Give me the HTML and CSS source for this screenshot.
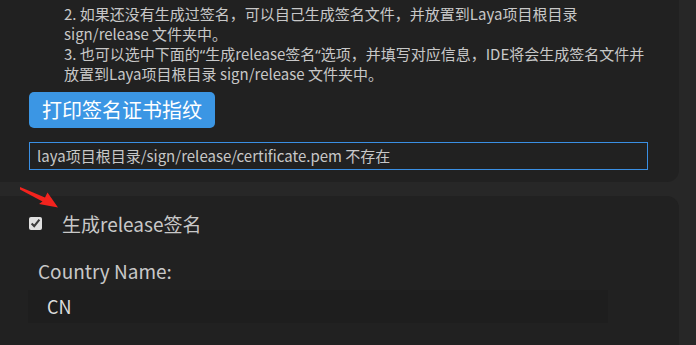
FILE: index.html
```html
<!DOCTYPE html>
<html lang="zh-CN">
<head>
  <meta charset="UTF-8">
  <meta name="viewport" content="width=device-width, initial-scale=1.0">
  <link rel="stylesheet" href="styles.css">
  <title>发布设置</title>
</head>
<body>
  <div class="page">
    <section class="panel panel-top">
      <div class="tips">
        <p>2. 如果还没有生成过签名，可以自己生成签名文件，并放置到Laya项目根目录<br>sign/release 文件夹中。</p>
        <p>3. 也可以选中下面的<span class="q">“</span>生成release签名<span class="q">“</span>选项，并填写对应信息，IDE将会生成签名文件并<br>放置到Laya项目根目录 sign/release 文件夹中。</p>
      </div>
      <button class="print-btn">打印签名证书指纹</button>
      <div class="status-box">laya项目根目录/sign/release/certificate.pem 不存在</div>
    </section>

    <section class="panel panel-bottom">
      <label class="check-row">
        <input type="checkbox" checked>
        <span>生成release签名</span>
      </label>
      <div class="field">
        <div class="field-label">Country Name:</div>
        <div class="field-input">CN</div>
      </div>
      <div class="field">
        <div class="field-label">State or Province Name:</div>
        <div class="field-input"></div>
      </div>
    </section>
  </div>

  <!-- red annotation arrow -->
  <svg class="arrow" width="60" height="30" viewBox="0 0 60 30">
    <polygon points="20,6 45,16.5 47.5,11.5 58,26.5 39,23 42.5,20.5 20,8.5" fill="#f3231e"/>
  </svg>
</body>
</html>
```

FILE: styles.css
```css
/* Reset */
body, p {
  margin: 0;
  padding: 0;
}

body {
  background-color: #272727;
  font-family: "Noto Sans CJK SC", sans-serif;
  color: #c8c8c8;
  height: 345px;
  overflow: hidden;
  position: relative;
}

.page {
  width: 679px;
  display: flex;
  flex-direction: column;
  gap: 14px;
}

.panel {
  background-color: #212121;
}

.panel-top {
  border-radius: 0 0 12px 0;
  padding: 4px 0 12px 29px;
}

.tips {
  padding-left: 35px;
  font-size: 15px;
  line-height: 20px;
}

/* narrow latin quotes like the original font */
.q {
  font-family: "Noto Sans", sans-serif;
}

.print-btn {
  display: block;
  margin-top: 8px;
  height: 36px;
  padding: 0 13px;
  background-color: #3b96e4;
  color: #fff;
  border: none;
  border-radius: 5px;
  font-family: inherit;
  font-size: 20px;
  line-height: 36px;
  cursor: pointer;
}

.status-box {
  margin-top: 14px;
  width: 619px;
  height: 28px;
  box-sizing: border-box;
  border: 1px solid #3a8fe3;
  padding-left: 7px;
  font-size: 15px;
  line-height: 26px;
}

.panel-bottom {
  border-radius: 0 12px 0 0;
  padding: 11px 0 0 28px;
  min-height: 200px;
}

.check-row {
  display: flex;
  align-items: center;
  gap: 20px;
  height: 32px;
  font-size: 19px;
}

.check-row input {
  width: 13px;
  height: 13px;
  margin: 0 0 0 1px;
  accent-color: #e0e0e0;
}

.field {
  margin-top: 17px;
}

.field-label {
  padding-left: 10px;
  font-size: 19px;
  line-height: 30px;
}

.field-input {
  margin-top: 4px;
  width: 580px;
  height: 33px;
  background-color: #1e1e1e;
  padding-left: 19px;
  box-sizing: border-box;
  font-size: 18px;
  line-height: 33px;
  color: #dddddd;
}

.arrow {
  position: absolute;
  left: 0;
  top: 181px;
}
```
